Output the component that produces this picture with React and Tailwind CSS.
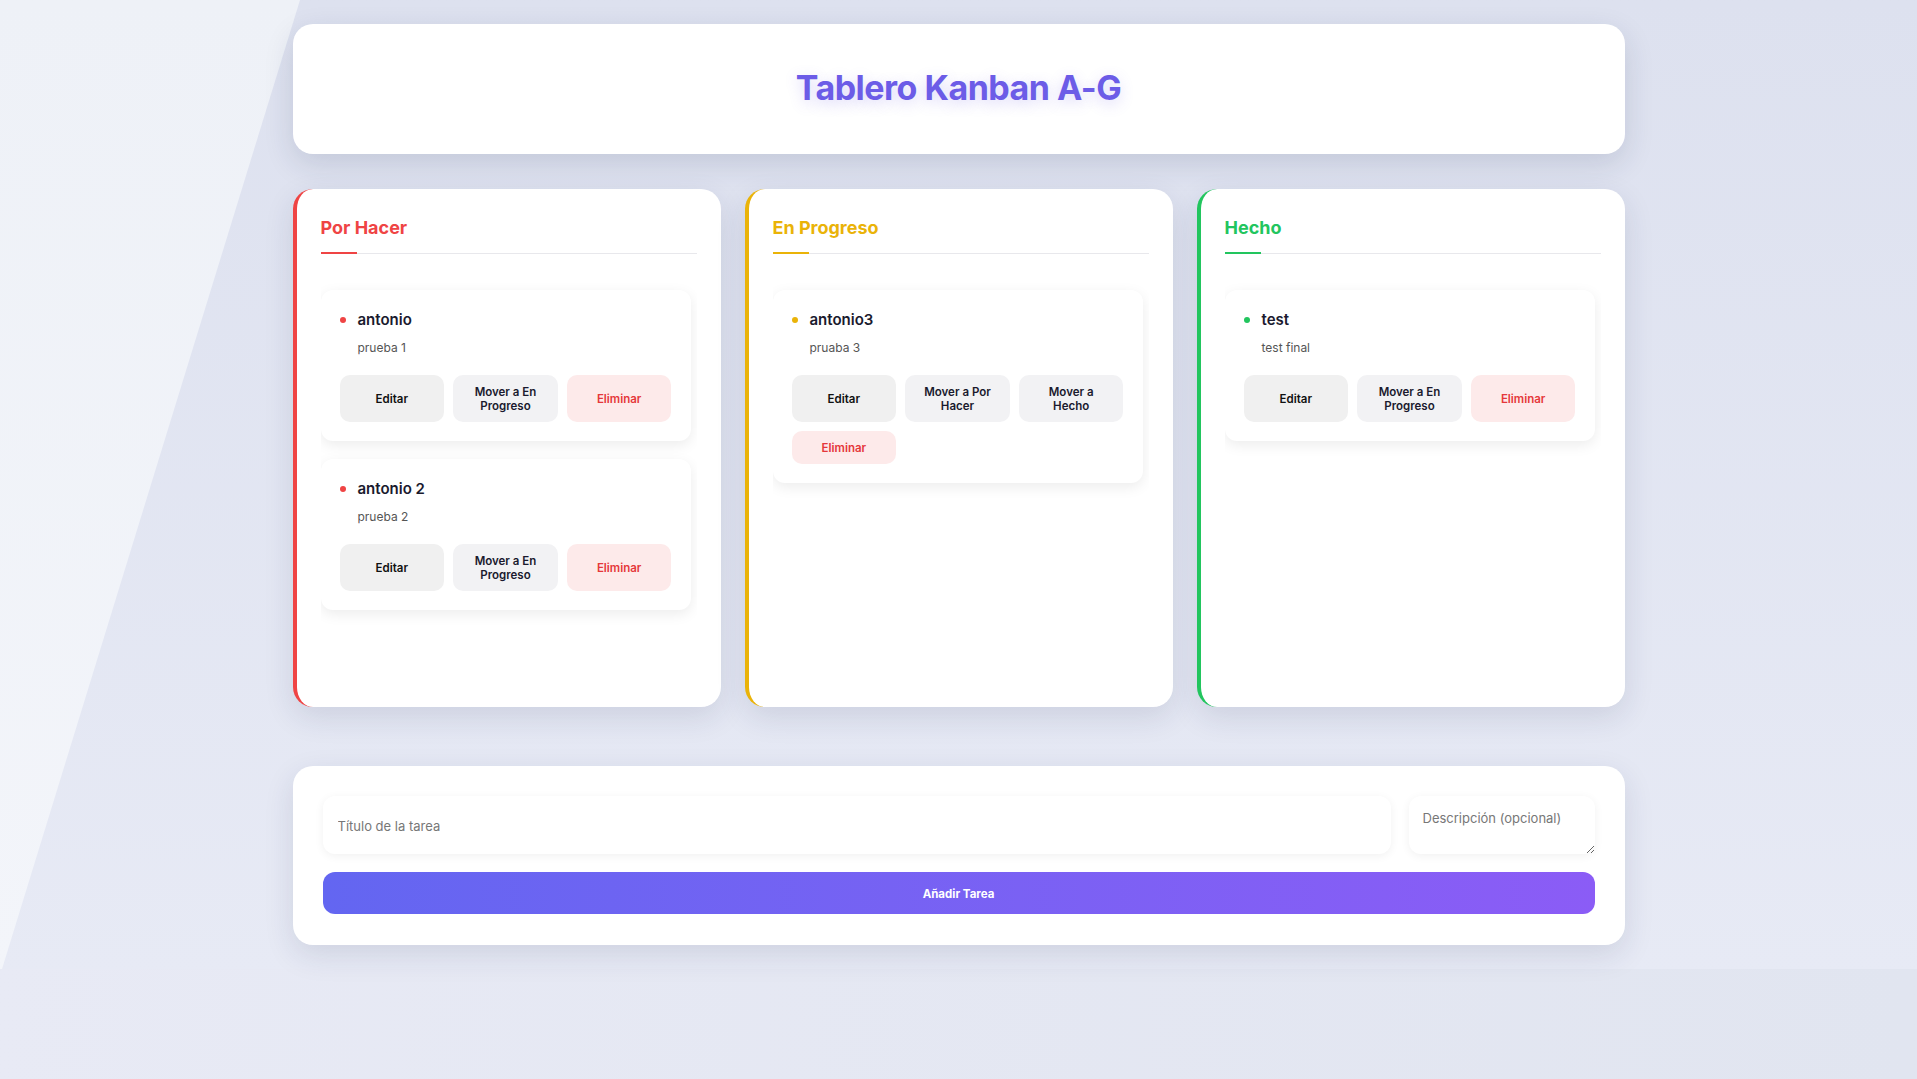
import React from "react";

const COLS = [
  {
    title: "Por Hacer",
    color: "red",
    tasks: [
      { title: "antonio", desc: "prueba 1", actions: ["Mover a En Progreso"] },
      { title: "antonio 2", desc: "prueba 2", actions: ["Mover a En Progreso"] },
    ],
  },
  {
    title: "En Progreso",
    color: "yellow",
    tasks: [
      { title: "antonio3", desc: "pruaba 3", actions: ["Mover a Por Hacer", "Mover a Hecho"] },
    ],
  },
  {
    title: "Hecho",
    color: "green",
    tasks: [{ title: "test", desc: "test final", actions: ["Mover a En Progreso"] }],
  },
];

const STYLES = {
  red: { border: "border-[#ef4444]", text: "text-[#ef4444]", bg: "bg-[#ef4444]" },
  yellow: { border: "border-[#eab308]", text: "text-[#eab308]", bg: "bg-[#eab308]" },
  green: { border: "border-[#22c55e]", text: "text-[#22c55e]", bg: "bg-[#22c55e]" },
};

function TaskCard({ task, st }) {
  return (
    <div className="bg-white rounded-[12px] p-[19px] shadow-[0_4px_14px_rgba(0,0,0,0.08)]">
      <div className="relative pl-[18px]">
        <span className={`absolute left-0 top-[8px] w-[6px] h-[6px] rounded-full ${st.bg}`} />
        <div className="text-[15px] leading-[22px] font-semibold text-[#1a1a2e]">{task.title}</div>
        <div className="mt-[8px] text-[12px] leading-[18px] text-[#555]">{task.desc}</div>
      </div>
      <div className="mt-[18px] grid grid-cols-3 gap-[9px]">
        <button className="rounded-[10px] bg-[#f0f0f0] py-[9.5px] px-[10px] text-[11.5px] leading-[14px] font-semibold text-[#111]">
          Editar
        </button>
        {task.actions.map((a) => (
          <button
            key={a}
            className="rounded-[10px] bg-[#f2f2f4] py-[9.5px] px-[14px] text-[11.5px] leading-[14px] font-semibold text-[#1a1a2e]"
          >
            {a}
          </button>
        ))}
        <button className="rounded-[10px] bg-[#fdeaea] py-[9.5px] px-[10px] text-[11.5px] leading-[14px] font-semibold text-[#e5383b]">
          Eliminar
        </button>
      </div>
    </div>
  );
}

function Column({ col }) {
  const st = STYLES[col.color];
  return (
    <div
      className={`h-[518px] flex flex-col bg-white rounded-[20px] border-l-4 ${st.border} pt-[25px] px-[24px] shadow-[0_10px_30px_rgba(30,40,80,0.12)] overflow-hidden`}
    >
      <h2 className={`relative pb-[12px] border-b border-[#e8e8ec] text-[18px] leading-[27px] font-bold ${st.text}`}>
        {col.title}
        <span className={`absolute left-0 bottom-[-1px] w-[36px] h-[2px] ${st.bg}`} />
      </h2>
      <div className="mt-[8px] pt-[28px] flex-1 overflow-hidden">
        <div className="flex flex-col gap-[18px] pr-[6px]">
          {col.tasks.map((t) => (
            <TaskCard key={t.title} task={t} st={st} />
          ))}
        </div>
      </div>
    </div>
  );
}

export default function App() {
  return (
    <div
      className="min-h-[1079px] bg-gradient-to-r from-[#e8eaf5] to-[#e1e5f0]"
      style={{ fontFamily: "Inter, 'Noto Sans', sans-serif" }}
    >
      <div className="relative bg-gradient-to-b from-[#dde1ef] to-[#e7eaf5]">
        <div className="absolute inset-0 bg-gradient-to-b from-[#eef1f7] to-[#f3f5fa] [clip-path:polygon(0_0,300px_0,2px_100%,0_100%)]" />
        <div className="relative w-[1334px] mx-auto pl-[1px] pr-[1px] pt-[24px] pb-[24px]">
          <header className="h-[130px] rounded-[20px] bg-white flex items-center justify-center pb-[4px] shadow-[0_10px_30px_rgba(30,40,80,0.14)]">
            <h1 className="text-[34px] font-bold tracking-[-0.5px] text-[#6c5ce7] [text-shadow:0_4px_14px_rgba(108,92,231,0.25)]">
              Tablero Kanban A-G
            </h1>
          </header>

          <div className="mt-[35px] grid grid-cols-3 gap-[24px]">
            {COLS.map((c) => (
              <Column key={c.title} col={c} />
            ))}
          </div>

          <div className="mt-[59px] bg-white rounded-[20px] pt-[30px] pb-[31px] px-[30px] shadow-[0_10px_30px_rgba(30,40,80,0.12)]">
            <div className="flex gap-[18px]">
              <input
                placeholder="Título de la tarea"
                className="flex-1 h-[58px] rounded-[12px] bg-white px-[15px] pt-[2px] text-[13px] text-[#333] placeholder:text-[#777] shadow-[0_2px_10px_rgba(0,0,0,0.06)] outline-none"
              />
              <textarea
                placeholder="Descripción (opcional)"
                className="w-[186px] h-[58px] rounded-[12px] bg-white px-[14px] py-[13px] text-[13px] leading-[18px] text-[#333] placeholder:text-[#777] shadow-[0_2px_10px_rgba(0,0,0,0.06)] outline-none"
              />
            </div>
            <button className="mt-[18px] w-full h-[42px] pt-[3px] rounded-[12px] bg-gradient-to-r from-[#6366f1] to-[#8b5cf6] text-white text-[11.5px] font-bold">
              Añadir Tarea
            </button>
          </div>
        </div>
      </div>
    </div>
  );
}
